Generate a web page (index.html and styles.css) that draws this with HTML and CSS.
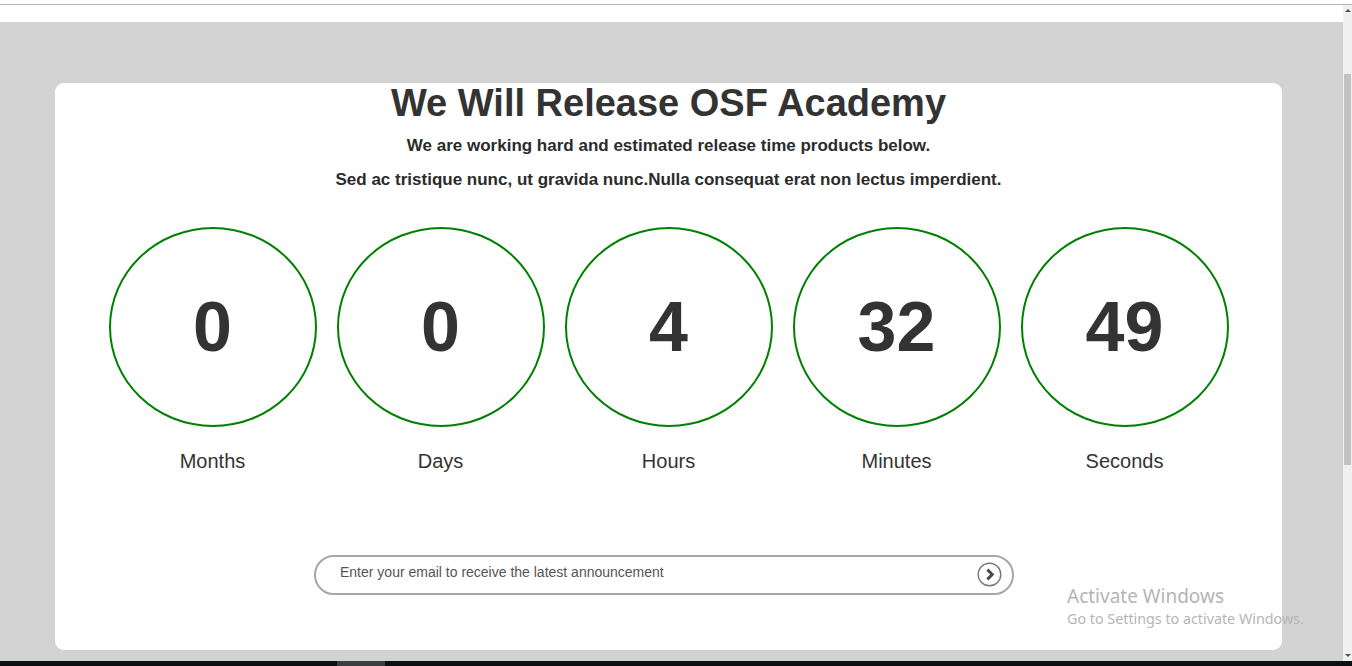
FILE: index.html
```html
<!DOCTYPE html>
<html lang="en">
<head>
<meta charset="utf-8">
<title>We Will Release OSF Academy</title>
<link rel="stylesheet" href="styles.css">
</head>
<body>
<div class="topline"></div>
<div class="window">
  <div class="viewport">
    <div class="toolbar"></div>
    <div class="page">
      <div class="card">
        <h1 class="title">We Will Release OSF Academy</h1>
        <p class="sub sub-1">We are working hard and estimated release time products below.</p>
        <p class="sub sub-2">Sed ac tristique nunc, ut gravida nunc.Nulla consequat erat non lectus imperdient.</p>
        <div class="countdown">
          <div class="unit"><div class="ring"><span class="num">0</span></div><div class="label">Months</div></div>
          <div class="unit"><div class="ring"><span class="num">0</span></div><div class="label">Days</div></div>
          <div class="unit"><div class="ring"><span class="num">4</span></div><div class="label">Hours</div></div>
          <div class="unit"><div class="ring"><span class="num">32</span></div><div class="label">Minutes</div></div>
          <div class="unit"><div class="ring"><span class="num">49</span></div><div class="label">Seconds</div></div>
        </div>
        <form class="subscribe">
          <input class="email" type="text" placeholder="Enter your email to receive the latest announcement">
          <button class="go" type="button" aria-label="Submit">
            <svg width="25" height="25" viewBox="0 0 25 25">
              <circle cx="12.5" cy="12.5" r="11.3" fill="#fff" stroke="#777" stroke-width="1.4"/>
              <path d="M10.4 7.6 L15.2 12.5 L10.4 17.4" fill="none" stroke="#4a4a4a" stroke-width="3" stroke-linecap="butt" stroke-linejoin="miter"/>
            </svg>
          </button>
        </form>
      </div>
    </div>
    <div class="activate">
      <div class="act-1">Activate Windows</div>
      <div class="act-2">Go to Settings to activate Windows.</div>
    </div>
  </div>
  <div class="scrollbar">
    <div class="arrow up"></div>
    <div class="track"><div class="thumb"></div></div>
    <div class="arrow down"></div>
  </div>
</div>
<div class="taskbar"><div class="task-item"></div></div>
</body>
</html>
```
FILE: styles.css
```css
* { box-sizing: border-box; }
html, body { margin: 0; padding: 0; }
body {
  width: 1352px;
  height: 666px;
  overflow: hidden;
  background: #fff;
  font-family: "Liberation Sans", Arial, sans-serif;
  color: #333;
}
.topline {
  height: 5px;
  border-bottom: 1px solid #b4b4b4;
  background: #fff;
}
.window {
  display: flex;
  height: 656px;
}
.viewport {
  position: relative;
  width: 1343px;
  display: flex;
  flex-direction: column;
}
.toolbar {
  height: 17px;
  background: #fff;
}
.page {
  flex: 1;
  background: #d3d3d3;
  padding: 61px 61px 0 55px;
}
.card {
  width: 1227px;
  height: 567px;
  background: #fff;
  border-radius: 9px;
  display: flex;
  flex-direction: column;
  align-items: center;
}
.title {
  margin: 0;
  font-size: 38px;
  line-height: 40px;
  font-weight: bold;
  color: #333;
}
.sub {
  margin: 0;
  font-size: 17px;
  line-height: 20px;
  font-weight: bold;
  color: #2b2b2b;
}
.sub-1 { margin-top: 13px; }
.sub-2 { margin-top: 14px; }
.countdown {
  margin-top: 37px;
  display: grid;
  grid-template-columns: repeat(5, 228px);
}
.unit {
  display: flex;
  flex-direction: column;
  align-items: center;
}
.ring {
  width: 208px;
  height: 200px;
  border: 2px solid #008000;
  border-radius: 50%;
  display: flex;
  align-items: center;
  justify-content: center;
}
.num {
  font-size: 70px;
  line-height: 72px;
  font-weight: bold;
  color: #333;
}
.label {
  margin-top: 22px;
  font-size: 20px;
  line-height: 24px;
  color: #333;
}
.subscribe {
  margin-top: 82px;
  margin-right: 9px;
  width: 700px;
  height: 40px;
  border: 2px solid #a6a6a6;
  border-radius: 20px;
  display: flex;
  align-items: center;
  padding: 0 10px 0 24px;
}
.email {
  flex: 1;
  border: 0;
  outline: none;
  padding: 0;
  margin-bottom: 6px;
  font-family: "Liberation Sans", Arial, sans-serif;
  font-size: 14px;
  color: #555;
  background: transparent;
}
.email::placeholder { color: #555; }
.go {
  width: 25px;
  height: 25px;
  padding: 0;
  margin: 0 0 1px 0;
  border: 0;
  background: none;
  display: flex;
}
.activate {
  position: absolute;
  left: 1067px;
  top: 579px;
  font-family: "Noto Sans", "Open Sans", sans-serif;
  color: #b5b5b5;
  white-space: nowrap;
}
.act-1 { font-size: 19px; line-height: 24px; }
.act-2 { font-size: 14.3px; line-height: 22px; }
.scrollbar {
  width: 9px;
  background: #f0f0f0;
  display: flex;
  flex-direction: column;
  align-items: center;
}
.arrow { height: 12px; width: 9px; position: relative; }
.arrow.up::after {
  content: "";
  position: absolute;
  left: 2px; top: 4px;
  border-left: 3px solid transparent;
  border-right: 3px solid transparent;
  border-bottom: 3px solid #505050;
}
.arrow.down::after {
  content: "";
  position: absolute;
  left: 2px; top: 5px;
  border-left: 3px solid transparent;
  border-right: 3px solid transparent;
  border-top: 3px solid #505050;
}
.track { flex: 1; width: 9px; padding: 57px 1px 0 1px; }
.thumb { height: 391px; background: #c1c1c1; }
.taskbar {
  height: 5px;
  background: #0c1015;
  padding-left: 337px;
}
.task-item { width: 48px; height: 5px; background: #3a3d42; }
```
